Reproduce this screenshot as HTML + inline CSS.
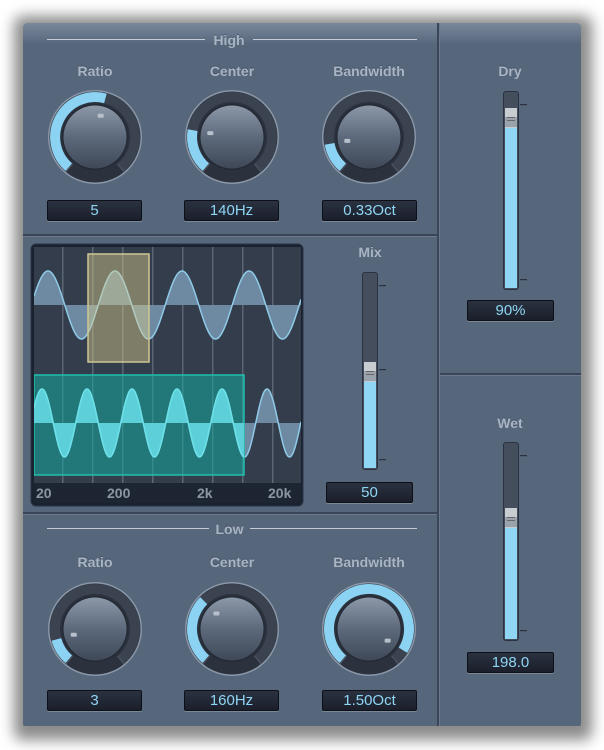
<!DOCTYPE html>
<html><head><meta charset="utf-8"><style>
body{margin:0;width:604px;height:750px;background:#fff;position:relative;overflow:hidden;font-family:"Liberation Sans",sans-serif}
#shadow{position:absolute;left:14px;top:16px;width:578px;height:724px;background:#8a8a8a;filter:blur(7px);border-radius:8px}
#panel{position:absolute;left:23px;top:23px;width:558px;height:703px;background:#56667b;border-radius:5px 5px 2px 2px;overflow:hidden}
.abs{position:absolute}
.lbl{position:absolute;color:#aab5c3;font-weight:bold;font-size:14px;text-align:center;text-shadow:0 -1px 0 #45536a}
.box{position:absolute;height:19px;background:linear-gradient(#2a3140,#1a1f2a);border:1px solid #0d1016;box-shadow:0 1px 0 #7a889a;color:#8fd6f5;font-size:15px;text-align:center;line-height:20px;border-radius:2px}
.hl{position:absolute;height:1px;background:#c5ccd6}
.div{position:absolute;background:#3a4658}
</style></head><body>
<div id="shadow"></div>
<div id="panel">
<div class="abs" style="left:0;top:0;width:558px;height:22px;background:linear-gradient(#7a889b,#56667b)"></div>
</div>
<svg class="abs" style="left:0;top:0" width="604" height="750" id="s"></svg>
<div id="txt"></div>
<script>
var s=document.getElementById('s'),h='';
// dividers
h+='<rect x="437" y="23" width="2" height="703" fill="#3a4658"/><rect x="439" y="23" width="1" height="703" fill="#6a7990"/>';
h+='<rect x="23" y="234" width="414" height="2" fill="#3a4658"/><rect x="23" y="236" width="414" height="1" fill="#6a7990"/>';
h+='<rect x="23" y="512" width="414" height="2" fill="#3a4658"/><rect x="23" y="514" width="414" height="1" fill="#6a7990"/>';
h+='<rect x="440" y="373" width="141" height="2" fill="#3a4658"/><rect x="440" y="375" width="141" height="1" fill="#6a7990"/>';
// header lines
h+='<rect x="47" y="39" width="158" height="1" fill="#c5ccd6"/><rect x="253" y="39" width="164" height="1" fill="#c5ccd6"/>';
h+='<rect x="47" y="528" width="162" height="1" fill="#c5ccd6"/><rect x="250" y="528" width="167" height="1" fill="#c5ccd6"/>';
function pt(cx,cy,r,a){a=(a-90)*Math.PI/180;return [cx+r*Math.cos(a),cy+r*Math.sin(a)];}
function arc(cx,cy,r,a0,a1){var p=pt(cx,cy,r,a0),q=pt(cx,cy,r,a1);var l=(a1-a0)>180?1:0;return 'M'+p[0].toFixed(1)+' '+p[1].toFixed(1)+'A'+r+' '+r+' 0 '+l+' 1 '+q[0].toFixed(1)+' '+q[1].toFixed(1);}
function knob(cx,cy,v){
 var o='';
 o+='<circle cx="'+cx+'" cy="'+cy+'" r="47" fill="#8a97a8"/>';
 o+='<circle cx="'+cx+'" cy="'+cy+'" r="45.5" fill="#2b313d"/>';
 o+='<path d="'+arc(cx,cy,40,-140,140)+'" stroke="#3b4350" stroke-width="10" fill="none"/>';
 o+='<path d="'+arc(cx,cy,40,-140,v)+'" stroke="#8cd3f3" stroke-width="10" fill="none"/>';
 var a=pt(cx,cy,45,-140),b=pt(cx,cy,35,-140),c=pt(cx,cy,45,140),d=pt(cx,cy,35,140);
 o+='<line x1="'+a[0]+'" y1="'+a[1]+'" x2="'+b[0]+'" y2="'+b[1]+'" stroke="#4a5260" stroke-width="1.5"/>';
 o+='<line x1="'+c[0]+'" y1="'+c[1]+'" x2="'+d[0]+'" y2="'+d[1]+'" stroke="#4a5260" stroke-width="1.5"/>';
 o+='<circle cx="'+cx+'" cy="'+cy+'" r="33" fill="#252b35"/>';
 o+='<circle cx="'+cx+'" cy="'+cy+'" r="31.5" fill="url(#kg)"/>';
 var m=pt(cx,cy,22,v);
 o+='<rect x="'+(m[0]-3)+'" y="'+(m[1]-2)+'" width="6" height="4" rx="1" fill="#b8c0cc"/>';
 return o;}
h='<defs><linearGradient id="kg" x1="0" y1="0" x2="0" y2="1"><stop offset="0" stop-color="#8c98a8"/><stop offset="0.5" stop-color="#5d6a7c"/><stop offset="1" stop-color="#3e4857"/></linearGradient><clipPath id="gc"><rect x="34" y="247" width="267" height="236"/></clipPath></defs>'+h;
h+=knob(95,137,15)+knob(232,137,-80)+knob(369,137,-100);
h+=knob(95,629,-105)+knob(232,629,-45)+knob(369,629,122);
// graph
h+='<rect x="31" y="244" width="272" height="262" rx="5" fill="#1a2230" stroke="#2a3446"/>';
h+='<rect x="34" y="247" width="267" height="236" fill="#343d4b"/>';
h+='<g clip-path="url(#gc)">';
[62,92,122,152,182,212,242,272].forEach(function(x){h+='<rect x="'+x+'" y="247" width="1.5" height="236" fill="#5b6574"/>';});
function wave(cy,A,P,x0,fill,str){var d='M34 '+cy,l='';for(var x=34;x<=301;x+=1){var y=cy-A*Math.cos(2*Math.PI*(x-x0)/P);d+='L'+x+' '+y.toFixed(1);l+=(l?'L':'M')+x+' '+y.toFixed(1);}d+='L301 '+cy+'Z';return '<path d="'+d+'" fill="'+fill+'"/><path d="'+l+'" stroke="'+str+'" stroke-width="1.5" fill="none"/>';}
h+=wave(305,34,67,48,'#6e8aa2','#8fcbe8');
h+='<rect x="88" y="254" width="61" height="108" fill="rgba(215,205,140,0.45)" stroke="#cfc695" stroke-width="1.5"/>';
h+=wave(423,34,45,42,'#6e8aa2','#8fcbe8');
h+='<rect x="34" y="375" width="210" height="100" fill="rgba(20,170,160,0.55)" stroke="#1fc0ae" stroke-width="1.5"/>';
h+='<clipPath id="tc"><rect x="34" y="375" width="210" height="100"/></clipPath>';
h+='<g clip-path="url(#tc)">'+wave(423,34,45,42,'#5ccfd8','#6ee0ea')+'</g>';
h+='</g>';
h+='<rect x="34" y="483" width="267" height="20" fill="#1e2532"/>';
// sliders
function slider(x,y0,y1,th){var o='';
 o+='<rect x="'+(x-1)+'" y="'+(y0-1)+'" width="16" height="'+(y1-y0+2)+'" rx="3" fill="#2a3140"/>';
 o+='<rect x="'+x+'" y="'+y0+'" width="14" height="'+(y1-y0)+'" rx="2" fill="#454e5c"/>';
 o+='<rect x="'+(x+1)+'" y="'+(th+18)+'" width="12" height="'+(y1-th-19)+'" fill="#8fd6f5"/>';
 o+='<rect x="'+(x+1)+'" y="'+th+'" width="12" height="20" fill="#c8cdd2"/><rect x="'+(x+1)+'" y="'+(th+9)+'" width="12" height="10" fill="#9aa2ab"/>';
 o+='<rect x="'+(x+3)+'" y="'+(th+9)+'" width="8" height="1" fill="#666"/><rect x="'+(x+3)+'" y="'+(th+12)+'" width="8" height="1" fill="#666"/>';
 [y0+12,y1-10].forEach(function(t){o+='<rect x="'+(x+16)+'" y="'+t+'" width="7" height="1.2" fill="#2a3140"/>';});
 return o;}
h+=slider(363,273,469,362);
h+='<rect x="379" y="369" width="7" height="1.2" fill="#2a3140"/>';
h+=slider(504,92,289,108);
h+=slider(504,443,640,508);
s.innerHTML=h;
var t='';
function L(x,y,w,txt){t+='<div class="lbl" style="left:'+x+'px;top:'+y+'px;width:'+w+'px">'+txt+'</div>';}
function B(x,y,w,txt){t+='<div class="box" style="left:'+x+'px;top:'+y+'px;width:'+w+'px">'+txt+'</div>';}
L(205,32,48,'High');L(209,521,41,'Low');
L(45,63,100,'Ratio');L(182,63,100,'Center');L(319,63,100,'Bandwidth');
L(45,554,100,'Ratio');L(182,554,100,'Center');L(319,554,100,'Bandwidth');
L(340,244,60,'Mix');L(480,63,60,'Dry');L(480,415,60,'Wet');
B(47,200,93,'5');B(184,200,93,'140Hz');B(322,200,93,'0.33Oct');
B(47,690,93,'3');B(184,690,93,'160Hz');B(322,690,93,'1.50Oct');
B(326,482,85,'50');B(467,300,85,'90%');B(467,652,85,'198.0');
[['20',36],['200',107],['2k',197],['20k',268]].forEach(function(a){t+='<div class="abs" style="left:'+a[1]+'px;top:485px;color:#8c95a2;font-size:14px;font-weight:bold">'+a[0]+'</div>';});
document.getElementById('txt').innerHTML=t;
</script>
</body></html>
